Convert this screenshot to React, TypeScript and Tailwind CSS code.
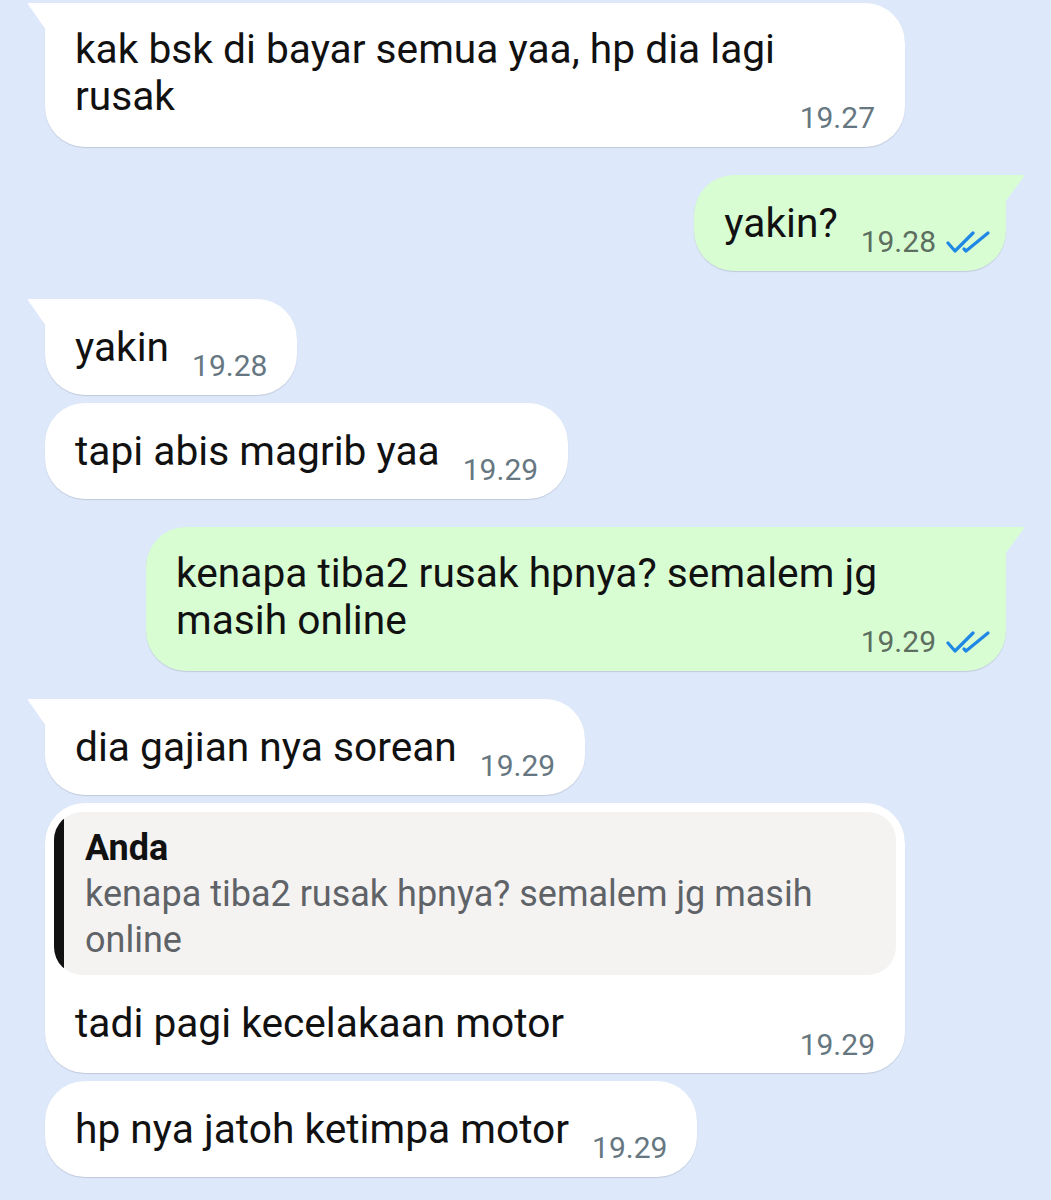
import React from 'react';
import clsx from 'clsx';

type Message = {
  side: 'in' | 'out';
  text: string;
  time: string;
  tail?: boolean;
  block?: boolean;
  quote?: { author: string; text: string };
};

const messages: Message[] = [
  { side: 'in', text: 'kak bsk di bayar semua yaa, hp dia lagi rusak', time: '19.27', tail: true, block: true },
  { side: 'out', text: 'yakin?', time: '19.28', tail: true },
  { side: 'in', text: 'yakin', time: '19.28', tail: true },
  { side: 'in', text: 'tapi abis magrib yaa', time: '19.29' },
  { side: 'out', text: 'kenapa tiba2 rusak hpnya? semalem jg masih online', time: '19.29', tail: true, block: true },
  { side: 'in', text: 'dia gajian nya sorean', time: '19.29', tail: true },
  {
    side: 'in',
    text: 'tadi pagi kecelakaan motor',
    time: '19.29',
    block: true,
    quote: { author: 'Anda', text: 'kenapa tiba2 rusak hpnya? semalem jg masih online' },
  },
  { side: 'in', text: 'hp nya jatoh ketimpa motor', time: '19.29' },
];

const ReadTicks = () => (
  <svg width="45" height="24" viewBox="0 0 45 24" fill="none" stroke="#1f88e5" strokeWidth="3.2" strokeLinecap="round" strokeLinejoin="round">
    <path d="M2 13 L9 21 L27 3" />
    <path d="M18 19 L20 21 L42 3" />
  </svg>
);

const Tail = ({ out }: { out: boolean }) =>
  out ? (
    <svg className="absolute top-0 -right-[19px]" width="20" height="27" viewBox="0 0 20 27">
      <path d="M0 0 H18 Q20 0 18.5 2 L0 27 Z" fill="#d9fdd3" />
    </svg>
  ) : (
    <svg className="absolute top-0 -left-[18px]" width="19" height="27" viewBox="0 0 19 27">
      <path d="M19 0 H2 Q0 0 1.5 2 L19 27 Z" fill="#ffffff" />
    </svg>
  );

const Bubble = ({ m, first }: { m: Message; first: boolean }) => {
  const out = m.side === 'out';
  const timeColor = out ? 'text-[#5c6e5f]' : 'text-[#667781]';

  return (
    <div
      className={clsx(
        'relative rounded-[40px] shadow-[0_1px_1px_rgba(0,0,0,0.13)] text-[#111111]',
        out ? 'self-end mr-[45px] bg-[#d9fdd3]' : 'self-start ml-[45px] bg-white',
        m.tail && (out ? 'rounded-tr-none' : 'rounded-tl-none'),
        m.block && 'w-[860px]',
        first ? '' : m.tail ? 'mt-[28px]' : 'mt-[8px]'
      )}
    >
      {m.tail && <Tail out={out} />}

      {m.quote && (
        <div className="px-[9px] pt-[9px]">
          <div className="flex overflow-hidden rounded-[28px] bg-[#f4f3f2]">
            <div className="w-[10px] shrink-0 bg-[#111111]" />
            <div className="pl-[21px] pr-[40px] pt-[13px] pb-[12px] text-[36px] leading-[46px]">
              <div className="font-bold text-[#111111]">{m.quote.author}</div>
              <div className="text-[#5f6368]">{m.quote.text}</div>
            </div>
          </div>
        </div>
      )}

      {m.block ? (
        <div
          className={clsx(
            'pl-[30px]',
            out ? 'pr-[15px]' : 'pr-[30px]',
            m.quote ? 'pt-[25px] pb-[13px]' : 'pt-[23px] pb-[14px]'
          )}
        >
          <div className={clsx('text-[40.7px] leading-[47px]', out ? 'pr-[25px]' : 'pr-[10px]')}>{m.text}</div>
          <div className="-mt-[17px] flex items-center justify-end gap-[10px] text-[30px] leading-[30px]">
            <span className={timeColor}>{m.time}</span>
            {out && <ReadTicks />}
          </div>
        </div>
      ) : (
        <div className={clsx('flex items-end pl-[30px] pt-[25px] pb-[24px]', out ? 'pr-[15px]' : 'pr-[30px]')}>
          <span className="text-[40.7px] leading-[47px] whitespace-nowrap">{m.text}</span>
          <span className={clsx('relative top-[10px] ml-[23px] flex items-center gap-[10px] text-[30px] leading-[30px]', timeColor)}>
            {m.time}
            {out && <ReadTicks />}
          </span>
        </div>
      )}
    </div>
  );
};

export default function App() {
  return (
    <div className="min-h-[1200px] w-full bg-[#dde8fb] pt-[3px] font-['Roboto',sans-serif] flex flex-col">
      {messages.map((m, i) => (
        <Bubble key={i} m={m} first={i === 0} />
      ))}
    </div>
  );
}
